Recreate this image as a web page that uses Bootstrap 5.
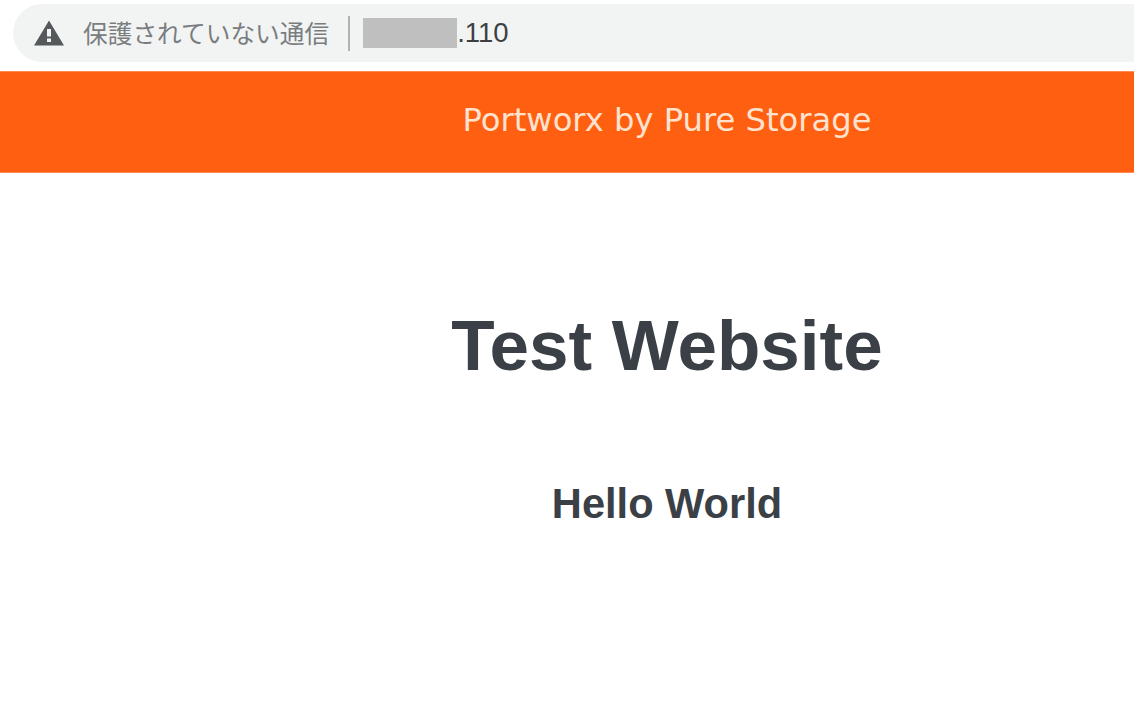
<!DOCTYPE html>
<html lang="ja"><head><meta charset="utf-8"><title>Test Website</title>
<link href="https://cdn.jsdelivr.net/npm/bootstrap@5.3.0/dist/css/bootstrap.min.css" rel="stylesheet">
<style>
html,body{background:#fff;overflow:hidden}
.chrome-strip{height:71px;background:#fff;padding:4px 0 0 13px}
.addr-pill{height:58px;background:#f2f4f4;border-radius:29px 0 0 29px;padding-left:21px}
.warn-ico{width:30px;height:26px;flex:none}
.addr-label{margin-left:19px;padding-bottom:2px;color:#7a7d80;font-family:"Noto Sans CJK JP",sans-serif;font-size:24.7px;line-height:1;white-space:nowrap}
.addr-sep{width:2px;height:35px;background:#b0b3b5;margin:0 13px 0 19px;flex:none}
.addr-mask{width:94px;height:30px;background:#bfbfbf;flex:none}
.addr-host{font-family:"Liberation Sans",sans-serif;font-size:27.5px;line-height:1;color:#3c4043}
.brand-bar{height:102px;background:#ff5f11;border-top:1px solid #ff8a50;border-bottom:1px solid #ff8a50;padding-left:200px}
.brand-text{color:#ffe3cf;font-family:"DejaVu Sans",sans-serif;font-size:32.2px;line-height:1;padding-bottom:3px}
.main-pane{padding-left:200px;color:#3a4046;font-family:"Liberation Sans",sans-serif}
.main-title{font-size:71px;line-height:1;margin:137px 0 0;font-weight:700}
.main-sub{font-size:41.6px;line-height:1;margin:102px 0 0;font-weight:700}
</style></head>
<body>
<div class="chrome-strip">
  <div class="addr-pill d-flex align-items-center">
    <svg class="warn-ico" viewBox="0 0 30 26"><path fill-rule="evenodd" fill="#55595c" d="M15 0.5 L30 25.5 H0 Z M13 9 V16.5 H17 V9 Z M13 18.5 V22 H17 V18.5 Z"/></svg>
    <span class="addr-label">保護されていない通信</span>
    <span class="addr-sep"></span>
    <span class="addr-mask"></span>
    <span class="addr-host">.110</span>
  </div>
</div>
<div class="brand-bar d-flex align-items-center justify-content-center">
  <span class="brand-text">Portworx by Pure Storage</span>
</div>
<main class="main-pane text-center">
  <h1 class="main-title">Test Website</h1>
  <h2 class="main-sub">Hello World</h2>
</main>
<script src="https://cdn.jsdelivr.net/npm/bootstrap@5.3.0/dist/js/bootstrap.bundle.min.js"></script>
</body></html>
